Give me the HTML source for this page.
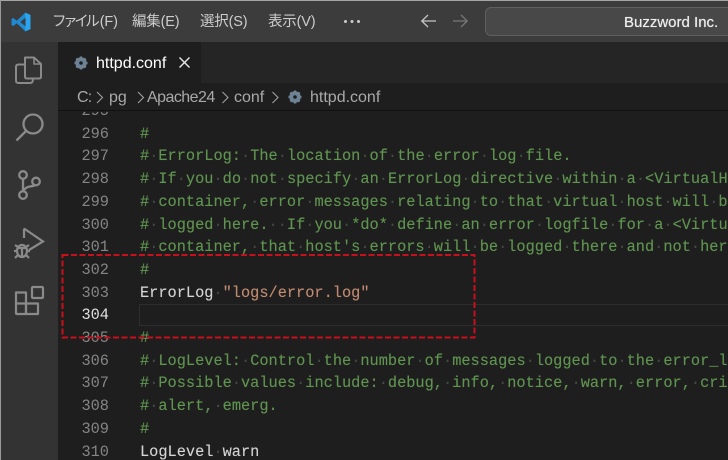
<!DOCTYPE html>
<html><head><meta charset="utf-8">
<style>
html,body{margin:0;padding:0;background:#1e1e1e}
#r{position:relative;width:728px;height:460px;overflow:hidden;background:#1e1e1e;font-family:"Liberation Sans","Noto Sans CJK JP",sans-serif}
.a{position:absolute}
.m{position:absolute;color:#ccc;font-size:14.5px;top:12px;line-height:20px;white-space:nowrap;letter-spacing:-.2px}
.m b{font-weight:normal;letter-spacing:-3.4px}
.l{position:absolute;left:140px;height:22.72px;font:15.3px/22.72px "Liberation Mono",monospace;color:#5f9350;white-space:pre;text-shadow:0 0 .5px rgba(95,147,80,.7)}
.n{position:absolute;left:60px;width:49px;text-align:right;font:15.3px/22.72px "Liberation Mono",monospace;color:#858585}
.l i{font-style:normal;color:#454b45;text-shadow:none}
.w{color:#d4d4d4;text-shadow:0 0 .5px rgba(212,212,212,.6)}.s{color:#c08a70;text-shadow:0 0 .5px rgba(192,138,112,.6)}
.b{position:absolute;top:87px;font-size:16px;line-height:22px;color:#a9a9a9;white-space:nowrap}
svg{position:absolute;overflow:visible}
</style></head><body><div id="r">
<div class="a" style="left:0;top:0;width:728px;height:42px;background:#3c3c3c"></div>
<div class="a" style="left:0;top:0;width:728px;height:1px;background:#a5a5a5"></div>
<div class="a" style="left:1px;top:42px;width:57px;height:418px;background:#333"></div>
<div class="a" style="left:0;top:0;width:1px;height:460px;background:#9a9a9a"></div>
<div class="a" style="left:58px;top:42px;width:670px;height:41px;background:#252526"></div>
<div class="a" style="left:58px;top:42px;width:143px;height:42px;background:#1e1e1e"></div>

<svg style="left:11px;top:12px" width="20" height="20" viewBox="0 0 20 20"><path d="M14.3 0.6 19.5 3v14l-5.2 2.4L5.800 11.300 2.200 14 .5 13V7l1.700-1 3.600 2.700z" fill="#1f8ad2"/><path d="M14.300.6 19.500 3v14l-5.200 2.400z" fill="#2aa5ee"/><path d="M14.500 5.800V14.200L9.200 10z" fill="#3c3c3c"/></svg>
<div class="m" style="left:52px"><b>ファイル</b><span style="margin-left:3.400px">(F)</span></div>
<div class="m" style="left:132px">編集(E)</div>
<div class="m" style="left:200px">選択(S)</div>
<div class="m" style="left:268px">表示(V)</div>
<div class="a" style="left:343.500px;top:20px;width:3px;height:3px;border-radius:50%;background:#ccc;box-shadow:6.500px 0 #ccc,13px 0 #ccc"></div>
<svg style="left:420px;top:13px" width="18" height="18" viewBox="0 0 18 18" fill="none" stroke="#c5c5c5" stroke-width="1.300"><path d="M16 8H2M8 2 1.800 8 8 14"/></svg>
<svg style="left:451px;top:13px" width="18" height="18" viewBox="0 0 18 18" fill="none" stroke="#777" stroke-width="1.300"><path d="M2 8H16M10 2 16.200 8 10 14"/></svg>
<div class="a" style="left:485px;top:7px;width:260px;height:27px;background:#484848;border:1px solid #5f5f5f;border-radius:6px"></div>
<div class="a" style="left:624px;top:12.500px;font-size:15px;line-height:20px;color:#eee;white-space:nowrap;text-shadow:0 0 .6px #eee">Buzzword Inc.</div>

<svg style="left:15px;top:55px" width="28" height="30" viewBox="0 0 28 30" fill="none" stroke="#8a8a8a" stroke-width="2" stroke-linejoin="round"><path d="M10 2.500H19L26 9V21.500Q26 23.500 24 23.500H12Q10 23.500 10 21.500z"/><path d="M19 2.500V9H26" stroke-width="1.600"/><path d="M10 9.500H3.500Q1 9.500 1 12V25.500Q1 28 3.500 28H15Q18 28 18 24V23.500"/></svg>
<svg style="left:15px;top:112px" width="30" height="30" viewBox="0 0 30 30" fill="none" stroke="#8a8a8a" stroke-width="2.300"><circle cx="18" cy="12" r="9.500"/><path d="M11 19 1.500 28.500"/></svg>
<svg style="left:17px;top:170px" width="24" height="30" viewBox="0 0 24 30" fill="none" stroke="#8a8a8a" stroke-width="2.300"><circle cx="6" cy="5" r="3.800"/><circle cx="6" cy="25" r="3.800"/><circle cx="19" cy="11.500" r="3.800"/><path d="M6 9V21M7 20Q9 17 13 16.500 17 16 18 15"/></svg>
<svg style="left:14px;top:227px" width="32" height="34" viewBox="0 0 32 34" fill="none" stroke="#8a8a8a" stroke-width="2.200"><path d="M10 1.500 29 14.500 15 23M10 1.500V11"/><ellipse cx="8" cy="24" rx="5" ry="6"/><path d="M1 18 4 20M15 18 12 20M0 24H3M13 24H16M1 31 4 28M15 31 12 28M4 21H12M8 21V30"/></svg>
<svg style="left:14px;top:285px" width="32" height="32" viewBox="0 0 32 32" fill="none" stroke="#8a8a8a" stroke-width="2.200" stroke-linejoin="round"><rect x="18" y="2" width="11" height="11" rx="1"/><path d="M2 7.500H12V29H3Q2 29 2 28zM2 18.500H24V29H12"/><path d="M12 18.500V29"/></svg>

<svg style="left:74px;top:56px" width="14" height="14" viewBox="0 0 14 14"><circle cx="7" cy="7" r="4.300" fill="none" stroke="#6d8294" stroke-width="3"/><path d="M7 .5V13.500M.5 7H13.500M2.400 2.400 11.600 11.600M11.600 2.400 2.400 11.600" stroke="#6d8294" stroke-width="2.300"/><circle cx="7" cy="7" r="1.800" fill="#1e1e1e"/></svg>
<div class="a" style="left:96px;top:53px;font-size:16px;line-height:22px;color:#fff;white-space:nowrap">httpd.conf</div>
<svg style="left:178px;top:56px" width="13" height="13" viewBox="0 0 13 13" stroke="#e8e8e8" stroke-width="1.400"><path d="M1.500 1.500 11.500 11.500M11.500 1.500 1.500 11.500"/></svg>

<div class="a" style="left:58px;top:84px;width:670px;height:26px;background:#1e1e1e"></div>
<div class="a" style="left:58px;top:110px;width:670px;height:1px;background:#111"></div>
<div class="b" style="left:77px;letter-spacing:-.8px">C:</div>
<div class="b" style="left:109px">pg</div>
<div class="b" style="left:147px;letter-spacing:-.55px">Apache24</div>
<div class="b" style="left:234px">conf</div>
<div class="b" style="left:310px">httpd.conf</div>
<svg style="left:0;top:0" width="728" height="120" fill="none" stroke="#a0a0a0" stroke-width="1.100"><path d="M97 92 102.500 97.500 97 103M138 92 143.500 97.500 138 103M222.500 92 228 97.500 222.500 103M272.500 92 278 97.500 272.500 103"/></svg>
<svg style="left:288px;top:90px" width="14" height="14" viewBox="0 0 14 14"><circle cx="7" cy="7" r="4.300" fill="none" stroke="#6d8294" stroke-width="3"/><path d="M7 .5V13.500M.5 7H13.500M2.400 2.400 11.600 11.600M11.600 2.400 2.400 11.600" stroke="#6d8294" stroke-width="2.300"/><circle cx="7" cy="7" r="1.800" fill="#1e1e1e"/></svg>

<div class="a" style="left:0;top:1px;width:728px;height:459px">
<div class="n" style="top:98.900px;clip-path:inset(12px 0 0 0)">295</div>
<div class="n" style="top:121.600px">296</div><div class="l" style="top:121.600px">#</div>
<div class="n" style="top:144.300px">297</div><div class="l" style="top:144.300px">#<i>·</i>ErrorLog:<i>·</i>The<i>·</i>location<i>·</i>of<i>·</i>the<i>·</i>error<i>·</i>log<i>·</i>file.</div>
<div class="n" style="top:167px">298</div><div class="l" style="top:167px">#<i>·</i>If<i>·</i>you<i>·</i>do<i>·</i>not<i>·</i>specify<i>·</i>an<i>·</i>ErrorLog<i>·</i>directive<i>·</i>within<i>·</i>a<i>·</i>&lt;VirtualHost&gt;</div>
<div class="n" style="top:189.800px">299</div><div class="l" style="top:189.800px">#<i>·</i>container,<i>·</i>error<i>·</i>messages<i>·</i>relating<i>·</i>to<i>·</i>that<i>·</i>virtual<i>·</i>host<i>·</i>will<i>·</i>be</div>
<div class="n" style="top:212.500px">300</div><div class="l" style="top:212.500px">#<i>·</i>logged<i>·</i>here.<i>··</i>If<i>·</i>you<i>·</i>*do*<i>·</i>define<i>·</i>an<i>·</i>error<i>·</i>logfile<i>·</i>for<i>·</i>a<i>·</i>&lt;VirtualHost&gt;</div>
<div class="n" style="top:235.200px">301</div><div class="l" style="top:235.200px">#<i>·</i>container,<i>·</i>that<i>·</i>host's<i>·</i>errors<i>·</i>will<i>·</i>be<i>·</i>logged<i>·</i>there<i>·</i>and<i>·</i>not<i>·</i>here.</div>
<div class="n" style="top:257.900px">302</div><div class="l" style="top:257.900px">#</div>
<div class="n" style="top:280.600px">303</div><div class="l w" style="top:280.600px">ErrorLog<i>·</i><span class="s">"logs/error.log"</span></div>
<div class="a" style="left:139px;top:303px;width:589px;height:20px;border:1px solid #2e2e2e;border-right:0"></div>
<div class="n" style="top:303.300px;color:#e0e0e0">304</div>
<div class="n" style="top:326px">305</div><div class="l" style="top:326px">#</div>
<div class="n" style="top:348.700px">306</div><div class="l" style="top:348.700px">#<i>·</i>LogLevel:<i>·</i>Control<i>·</i>the<i>·</i>number<i>·</i>of<i>·</i>messages<i>·</i>logged<i>·</i>to<i>·</i>the<i>·</i>error_log.</div>
<div class="n" style="top:371.400px">307</div><div class="l" style="top:371.400px">#<i>·</i>Possible<i>·</i>values<i>·</i>include:<i>·</i>debug,<i>·</i>info,<i>·</i>notice,<i>·</i>warn,<i>·</i>error,<i>·</i>crit,</div>
<div class="n" style="top:394.100px">308</div><div class="l" style="top:394.100px">#<i>·</i>alert,<i>·</i>emerg.</div>
<div class="n" style="top:416.800px">309</div><div class="l" style="top:416.800px">#</div>
<div class="n" style="top:439.500px">310</div><div class="l w" style="top:439.500px">LogLevel<i>·</i>warn</div>
</div>

<svg style="left:0;top:0" width="728" height="460"><rect x="62.500" y="255" width="412" height="82.500" fill="none" stroke="#c8101c" stroke-width="2" stroke-dasharray="6 2.500"/></svg>
</div></body></html>
